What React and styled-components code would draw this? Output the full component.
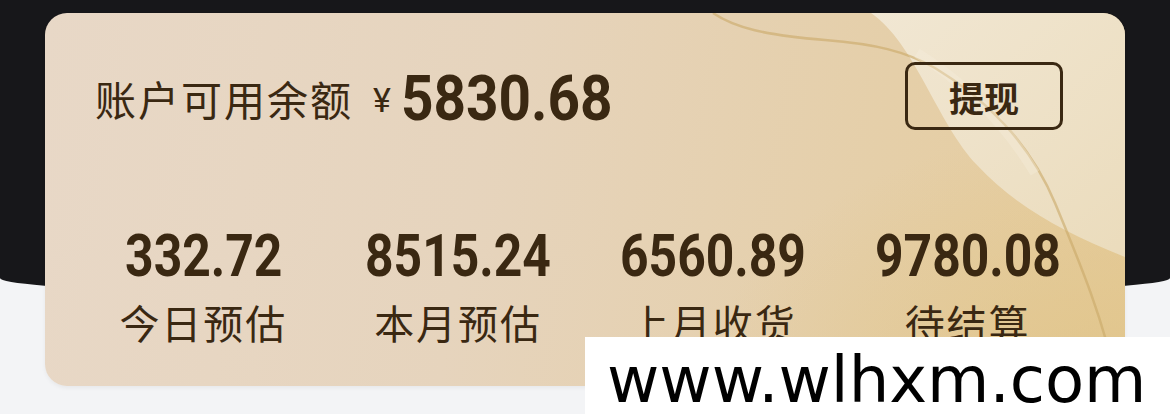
import React from 'react';
import styled, { createGlobalStyle } from 'styled-components';

const GlobalStyle = createGlobalStyle`
  html, body {
    margin: 0;
    padding: 0;
    background: #f3f4f6;
  }
  body {
    font-family: "Noto Sans CJK SC", "Noto Sans", sans-serif;
  }
`;

const ink = '#3a2812';

const Page = styled.div`
  position: relative;
  width: 1170px;
  height: 414px;
  overflow: hidden;
  padding: 13px 45px 0;
  box-sizing: border-box;
  background: #f3f4f6;

  &::before {
    content: '';
    position: absolute;
    left: 0;
    top: 0;
    width: 100%;
    height: 298px;
    background: #17171a;
    border-radius: 0 0 50% 50% / 0 0 20px 20px;
  }
`;

const Card = styled.section`
  position: relative;
  height: 373px;
  border-radius: 22px;
  overflow: hidden;
  padding: 49px 62px 0 50px;
  box-sizing: border-box;
  color: ${ink};
  background:
    radial-gradient(ellipse 420px 260px at 100% 100%, rgba(224, 196, 136, 0.85), rgba(224, 196, 136, 0)),
    linear-gradient(100deg, #e8d8c7 0%, #e6d4bd 40%, #e5cfa9 75%, #e6cc9c 100%);
  box-shadow: 0 2px 4px rgba(0, 0, 0, 0.05);
`;

const Decor = styled.svg`
  position: absolute;
  left: 0;
  top: 0;
  width: 100%;
  height: 100%;
  pointer-events: none;
`;

const TopRow = styled.div`
  position: relative;
  display: flex;
  align-items: center;
  justify-content: space-between;
  height: 68px;
`;

const Balance = styled.div`
  display: flex;
  align-items: center;
  padding-top: 4px;
`;

const BalanceLabel = styled.span`
  font-size: 41px;
  letter-spacing: 2px;
  line-height: 1;
`;

const Yen = styled.span`
  font-family: Roboto, "Liberation Sans", sans-serif;
  font-size: 34px;
  margin: 4px 10px 0 20px;
`;

const Amount = styled.span`
  display: inline-block;
  font-family: Roboto, "Liberation Sans", sans-serif;
  font-weight: 700;
  font-size: ${p => p.$size}px;
  line-height: 1;
  transform: scaleX(${p => p.$squeeze});
  transform-origin: ${p => p.$origin};
`;

const WithdrawButton = styled.button`
  width: 158px;
  height: 68px;
  box-sizing: border-box;
  border: 3px solid ${ink};
  border-radius: 10px;
  background: transparent;
  color: ${ink};
  font-family: "Noto Sans CJK SC", sans-serif;
  font-weight: 700;
  font-size: 35px;
  line-height: 1;
  padding: 0;
  cursor: pointer;
`;

const Stats = styled.div`
  position: relative;
  display: grid;
  grid-template-columns: repeat(4, 1fr);
  margin: 96px -32px 0 -19px;
`;

const Stat = styled.div`
  display: flex;
  flex-direction: column;
  align-items: center;
`;

const StatLabel = styled.span`
  margin-top: 12px;
  font-size: 40px;
  line-height: 48px;
  letter-spacing: 2px;
`;

const Watermark = styled.div`
  position: absolute;
  left: 585px;
  top: 337px;
  right: 0;
  bottom: 0;
  background: #ffffff;
  color: #000;
  font-family: "DejaVu Sans", sans-serif;
  font-size: 64px;
  line-height: 1;
  padding: 11px 0 0 22px;
  box-sizing: border-box;
  white-space: nowrap;
`;

const stats = [
  { value: '332.72', label: '今日预估' },
  { value: '8515.24', label: '本月预估' },
  { value: '6560.89', label: '上月收货' },
  { value: '9780.08', label: '待结算' },
];

export default function App() {
  return (
    <>
      <GlobalStyle />
      <Page>
        <Card>
          <Decor viewBox="0 0 1080 373" preserveAspectRatio="none">
            <defs>
              <linearGradient id="cream" x1="0" y1="0" x2="1" y2="1">
                <stop offset="0" stopColor="#f3ebda" />
                <stop offset="1" stopColor="#ecdfc3" />
              </linearGradient>
            </defs>
            <path
              d="M 826 0 C 870 30, 892 110, 932 152 C 972 195, 1020 220, 1080 244 L 1080 0 Z"
              fill="url(#cream)"
              opacity="0.85"
            />
            <path
              d="M 668 0 C 690 15, 720 22, 780 27 C 830 31, 860 38, 890 55 C 940 85, 985 130, 1010 190 C 1035 250, 1060 310, 1072 373"
              fill="none"
              stroke="#c9a868"
              strokeWidth="2.5"
              opacity="0.6"
            />
            <path
              d="M 872 40 C 920 70, 960 110, 990 160"
              fill="none"
              stroke="#f6eede"
              strokeWidth="10"
              opacity="0.35"
            />
          </Decor>
          <TopRow>
            <Balance>
              <BalanceLabel>账户可用余额</BalanceLabel>
              <Yen>¥</Yen>
              <Amount $size={63} $squeeze={0.9} $origin="left center">5830.68</Amount>
            </Balance>
            <WithdrawButton>提现</WithdrawButton>
          </TopRow>
          <Stats>
            {stats.map(s => (
              <Stat key={s.label}>
                <Amount $size={60} $squeeze={0.83} $origin="center">{s.value}</Amount>
                <StatLabel>{s.label}</StatLabel>
              </Stat>
            ))}
          </Stats>
        </Card>
        <Watermark>www.wlhxm.com</Watermark>
      </Page>
    </>
  );
}
